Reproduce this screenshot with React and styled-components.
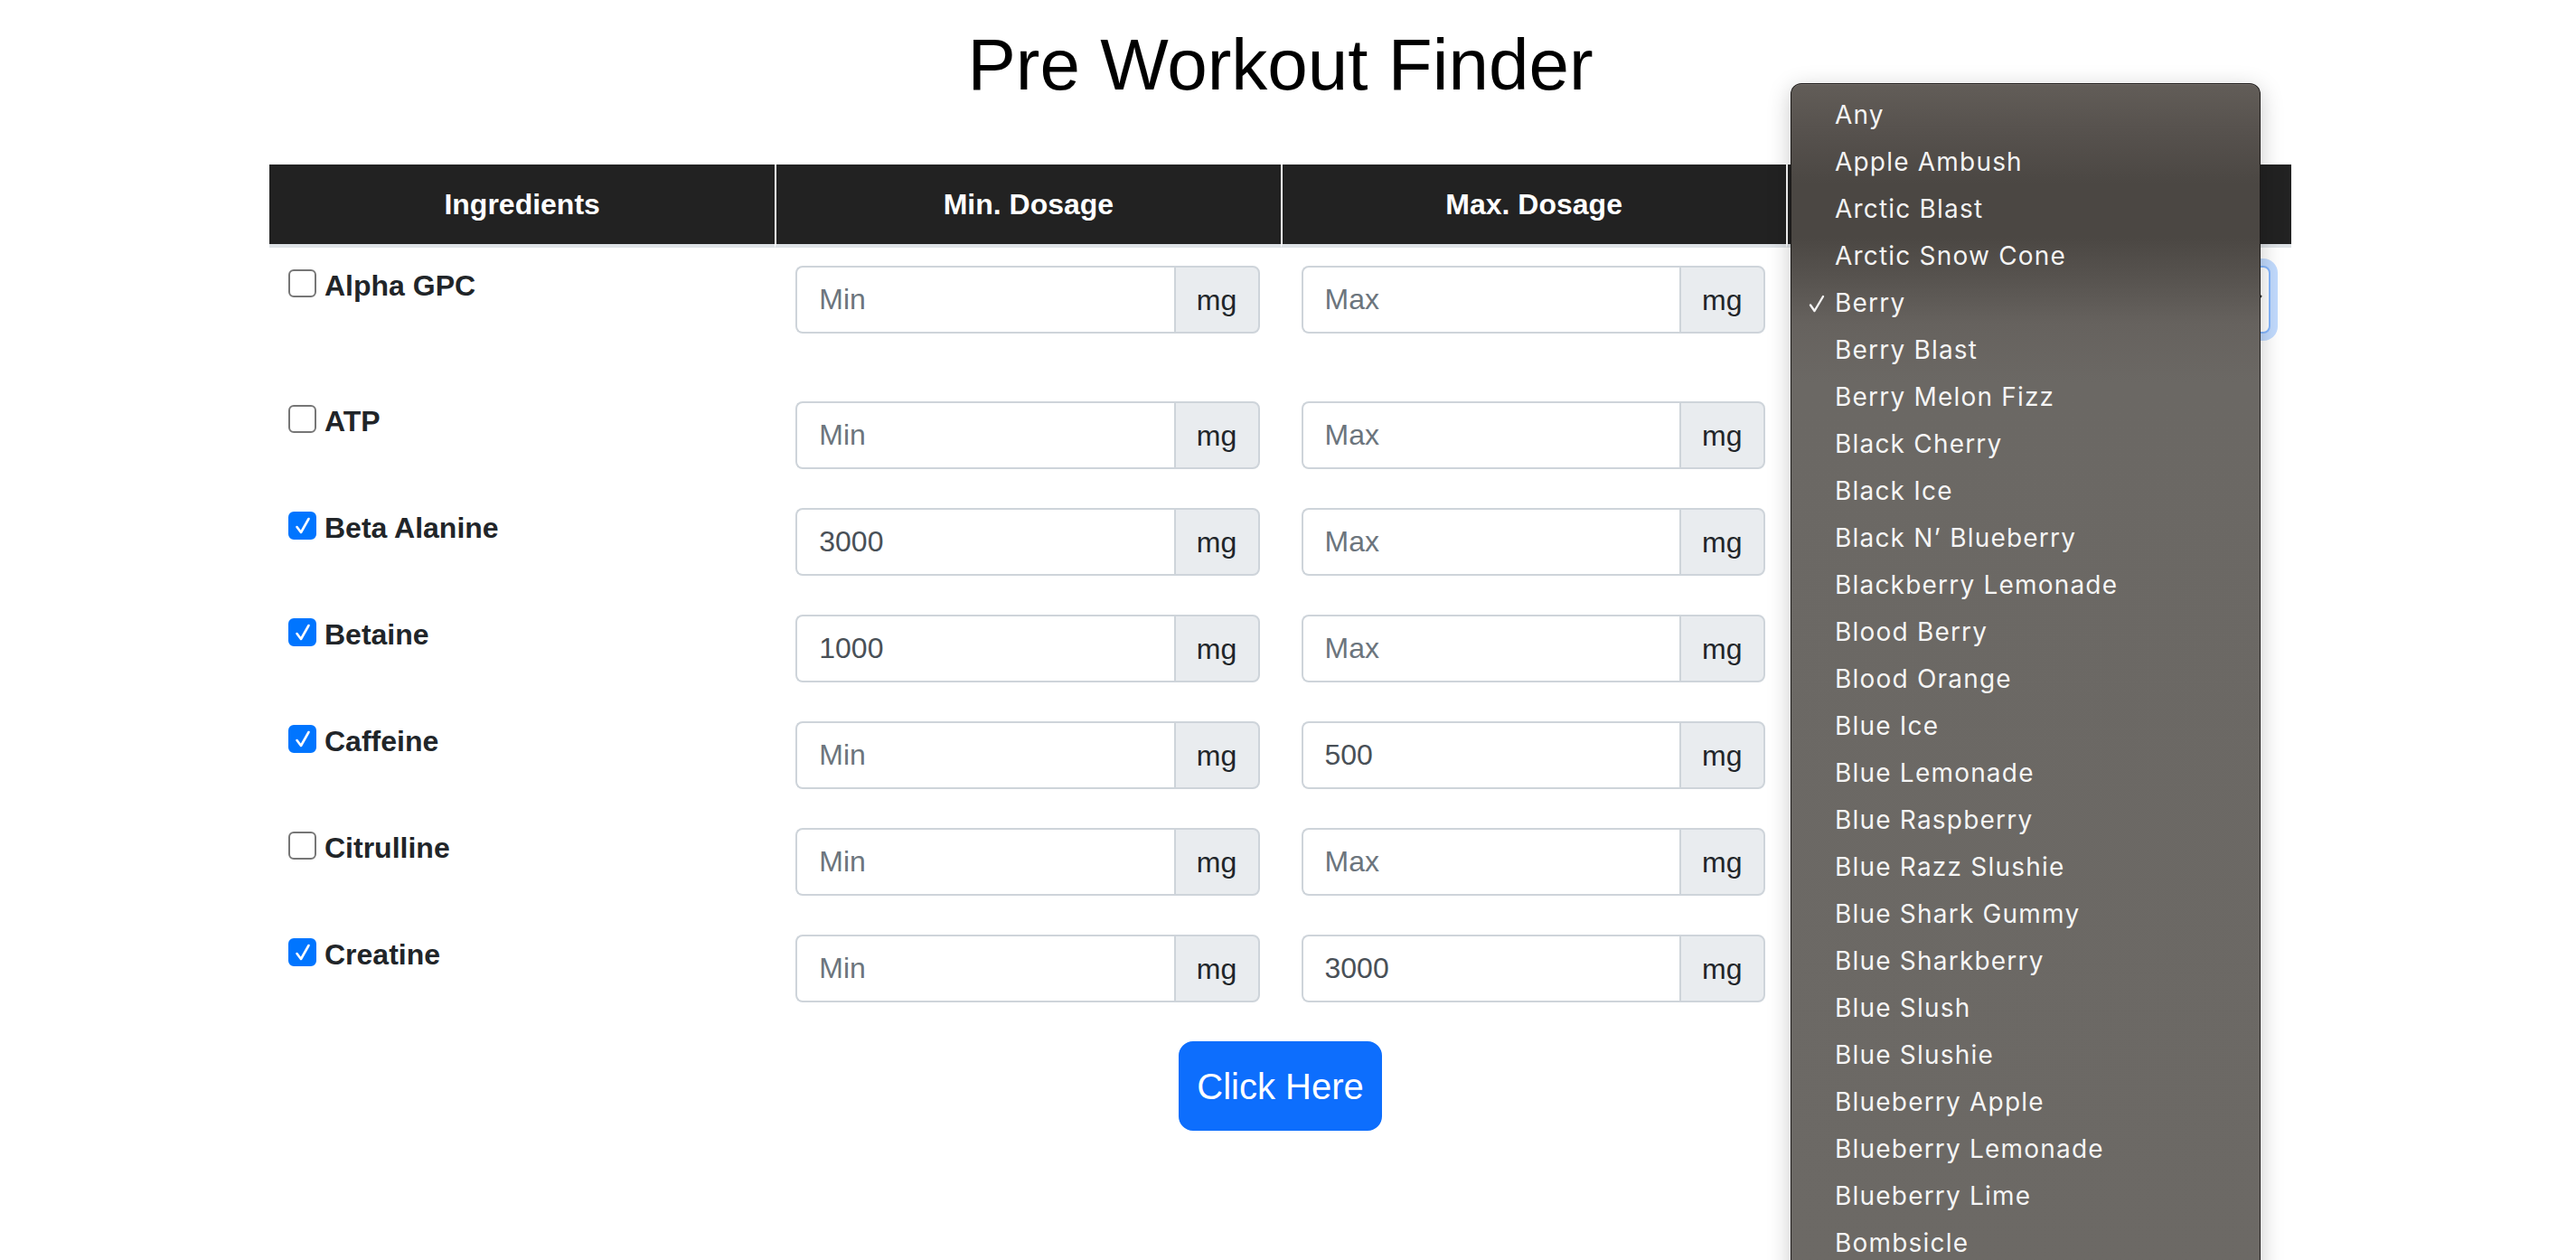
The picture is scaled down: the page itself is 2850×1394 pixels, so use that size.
import React from "react";
import styled, { createGlobalStyle } from "styled-components";

const GlobalStyle = createGlobalStyle`
  html, body {
    margin: 0;
    padding: 0;
    background: #ffffff;
    overflow: hidden;
  }
  body {
    font-family: "Liberation Sans", Arial, Helvetica, sans-serif;
    color: #212529;
  }
  *, *::before, *::after { box-sizing: border-box; }
`;

const Page = styled.div`
  position: relative;
  width: 2850px;
  height: 1394px;
  overflow: hidden;
  background: #fff;
`;

const Container = styled.main`
  width: 2237px;
  margin-left: 298px;
  padding-top: 24px;
  display: flex;
  flex-direction: column;
  align-items: center;
`;

const Title = styled.h1`
  margin: 0 0 62px;
  font-size: 80px;
  line-height: 96px;
  font-weight: 400;
  color: #000;
`;

const Table = styled.table`
  width: 100%;
  border-collapse: separate;
  border-spacing: 0;
  table-layout: fixed;
`;

const HeadCell = styled.th`
  background: #222222;
  color: #fff;
  font-size: 32px;
  font-weight: 700;
  line-height: 48px;
  padding: 20px 23px;
  text-align: center;
  border-bottom: 4px solid #dee2e6;
  & + & {
    border-left: 2px solid #fff;
  }
`;

const Cell = styled.td`
  padding: 20px 23px ${(p) => (p.$tall ? 55 : 23)}px;
  vertical-align: top;
`;

const Ingredient = styled.label`
  display: flex;
  align-items: flex-start;
  gap: 9px;
  font-size: 32px;
  font-weight: 700;
  line-height: 44px;
  color: #212529;
`;

const Box = styled.span`
  flex: none;
  width: 31px;
  height: 31px;
  margin-top: 4px;
  margin-left: -2px;
  border-radius: 6px;
  border: 2px solid ${(p) => (p.$checked ? "#0075ff" : "#767676")};
  background: ${(p) => (p.$checked ? "#0075ff" : "#fff")};
  display: flex;
  align-items: center;
  justify-content: center;
`;

const InputGroup = styled.div`
  display: flex;
  height: 75px;
`;

const Field = styled.input`
  flex: 1;
  min-width: 0;
  height: 100%;
  border: 2px solid #ced4da;
  border-right: none;
  border-radius: 8px 0 0 8px;
  padding: 12px 24px;
  font: 400 32px/48px "Liberation Sans", Arial, sans-serif;
  color: #495057;
  background: #fff;
  outline: none;
  &::placeholder {
    color: #6c757d;
  }
`;

const Addon = styled.span`
  flex: none;
  width: 95px;
  height: 100%;
  display: flex;
  align-items: center;
  justify-content: center;
  background: #e9ecef;
  border: 2px solid #ced4da;
  border-radius: 0 8px 8px 0;
  font-size: 32px;
  line-height: 48px;
  color: #212529;
`;

const SelectWrap = styled.div`
  position: relative;
  height: 75px;
`;

const Select = styled.select`
  appearance: none;
  width: 100%;
  height: 100%;
  border: 2px solid #86b7fe;
  border-radius: 8px;
  box-shadow: 0 0 0 8px rgba(13, 110, 253, 0.25);
  padding: 12px 40px 12px 24px;
  font: 400 32px/48px "Liberation Sans", Arial, sans-serif;
  color: #212529;
  background: #fff;
  outline: none;
`;

const Chevron = styled.svg`
  position: absolute;
  right: 8px;
  top: 30px;
  pointer-events: none;
`;

const SubmitButton = styled.button`
  margin-top: 20px;
  height: 99px;
  padding: 0 18px;
  background: #0d6efd;
  color: #fff;
  border: 2px solid #0d6efd;
  border-radius: 16px;
  font: 400 40px/60px "Liberation Sans", Arial, sans-serif;
  cursor: pointer;
`;

const Menu = styled.ul`
  position: absolute;
  left: 1981px;
  top: 92px;
  width: 520px;
  height: 1340px;
  margin: 0;
  padding: 8px 0 0;
  list-style: none;
  border-radius: 12px;
  border: 1px solid rgba(20, 18, 16, 0.85);
  background: linear-gradient(
    to bottom,
    #625d58 0px,
    #57524e 50px,
    #4b4743 110px,
    #4b4743 170px,
    #57534f 215px,
    #66625e 265px,
    #6b6864 330px,
    #6c6965 100%
  );
  box-shadow: 0 6px 26px rgba(0, 0, 0, 0.22), inset 0 1px 0 rgba(255, 255, 255, 0.12);
`;

const MenuItem = styled.li`
  position: relative;
  height: 52px;
  padding-left: 48px;
  font-family: Inter, "Noto Sans", sans-serif;
  font-size: 28px;
  line-height: 52px;
  letter-spacing: 1.2px;
  color: rgba(255, 255, 255, 0.95);
  white-space: nowrap;
`;

const Check = styled.svg`
  position: absolute;
  left: 19px;
  top: 17px;
`;

const ingredients = [
  { name: "Alpha GPC", checked: false, min: "", max: "" },
  { name: "ATP", checked: false, min: "", max: "" },
  { name: "Beta Alanine", checked: true, min: "3000", max: "" },
  { name: "Betaine", checked: true, min: "1000", max: "" },
  { name: "Caffeine", checked: true, min: "", max: "500" },
  { name: "Citrulline", checked: false, min: "", max: "" },
  { name: "Creatine", checked: true, min: "", max: "3000" },
];

const flavors = [
  "Any",
  "Apple Ambush",
  "Arctic Blast",
  "Arctic Snow Cone",
  "Berry",
  "Berry Blast",
  "Berry Melon Fizz",
  "Black Cherry",
  "Black Ice",
  "Black N\u2019 Blueberry",
  "Blackberry Lemonade",
  "Blood Berry",
  "Blood Orange",
  "Blue Ice",
  "Blue Lemonade",
  "Blue Raspberry",
  "Blue Razz Slushie",
  "Blue Shark Gummy",
  "Blue Sharkberry",
  "Blue Slush",
  "Blue Slushie",
  "Blueberry Apple",
  "Blueberry Lemonade",
  "Blueberry Lime",
  "Bombsicle",
];

function CheckBox({ checked }) {
  return (
    <Box $checked={checked}>
      {checked && (
        <svg width="20" height="22" viewBox="0 0 20 22">
          <path d="M3.5 12 L8 18 L16.5 3" fill="none" stroke="#fff" strokeWidth="2.6" strokeLinecap="round" strokeLinejoin="round" />
        </svg>
      )}
    </Box>
  );
}

function DoseInput({ value, placeholder }) {
  return (
    <InputGroup>
      <Field type="text" defaultValue={value} placeholder={placeholder} />
      <Addon>mg</Addon>
    </InputGroup>
  );
}

export default function App() {
  return (
    <Page>
      <GlobalStyle />
      <Container>
        <Title>Pre Workout Finder</Title>
        <Table>
          <thead>
            <tr>
              <HeadCell>Ingredients</HeadCell>
              <HeadCell>Min. Dosage</HeadCell>
              <HeadCell>Max. Dosage</HeadCell>
              <HeadCell>Flavor</HeadCell>
            </tr>
          </thead>
          <tbody>
            {ingredients.map((ing, i) => (
              <tr key={ing.name}>
                <Cell $tall={i === 0}>
                  <Ingredient>
                    <CheckBox checked={ing.checked} />
                    {ing.name}
                  </Ingredient>
                </Cell>
                <Cell $tall={i === 0}>
                  <DoseInput value={ing.min} placeholder="Min" />
                </Cell>
                <Cell $tall={i === 0}>
                  <DoseInput value={ing.max} placeholder="Max" />
                </Cell>
                <Cell $tall={i === 0}>
                  {i === 0 && (
                    <SelectWrap>
                      <Select defaultValue="Berry">
                        {flavors.map((f) => (
                          <option key={f}>{f}</option>
                        ))}
                      </Select>
                      <Chevron width="14" height="12" viewBox="0 0 14 12">
                        <path d="M2 3 L7 9 L12 3" fill="none" stroke="#333" strokeWidth="2" />
                      </Chevron>
                    </SelectWrap>
                  )}
                </Cell>
              </tr>
            ))}
          </tbody>
        </Table>
        <SubmitButton type="button">Click Here</SubmitButton>
      </Container>
      <Menu role="listbox">
        {flavors.map((f) => (
          <MenuItem key={f} role="option" aria-selected={f === "Berry"}>
            {f === "Berry" && (
              <Check width="18" height="20" viewBox="0 0 18 20">
                <path d="M2 11.5 L6.5 18 L16 2" fill="none" stroke="rgba(255,255,255,0.93)" strokeWidth="2.4" strokeLinecap="round" strokeLinejoin="round" />
              </Check>
            )}
            {f}
          </MenuItem>
        ))}
      </Menu>
    </Page>
  );
}
